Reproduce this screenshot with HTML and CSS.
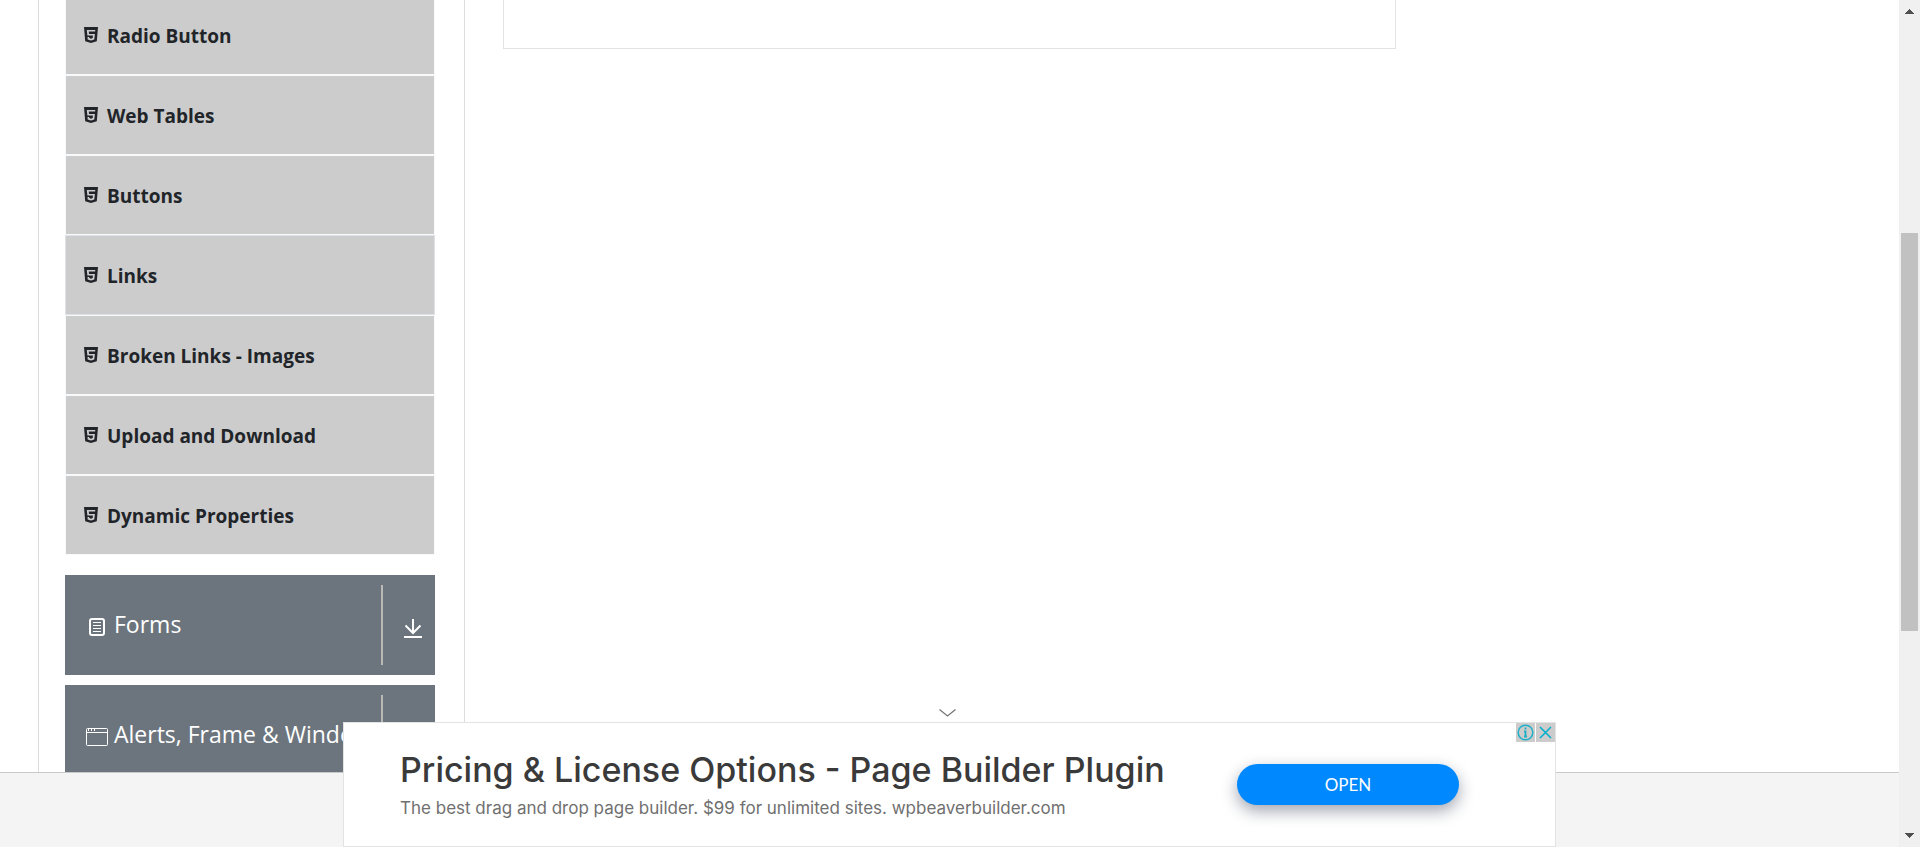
FILE: index.html
```html
<!DOCTYPE html>
<html lang="en">
<head>
<meta charset="utf-8">
<title>Elements</title>
<link rel="stylesheet" href="styles.css">
</head>
<body>
<svg class="defs" aria-hidden="true">
  <symbol id="html5" viewBox="0 0 14 16">
    <path fill="currentColor" fill-rule="evenodd" d="M0 0h14l-1.200 14.200L7 16l-5.800-1.800zM2.800 3l.6 5.500h5.500l-.2 2.600-1.700.6-1.700-.6-.1-1.200H3.500l.2 2.500L7 13.600l3.300-1.200.6-5.400H5L4.800 4.600h6.300L11.300 3z"/>
  </symbol>
  <symbol id="download" viewBox="0 0 18 20">
    <path fill="none" stroke="currentColor" stroke-width="2" d="M9 0v14M1.500 6.500L9 14l7.500-7.500M0 18h18"/>
  </symbol>
</svg>
<div class="viewport">
  <div class="page">
    <aside class="sidebar">
      <ul class="menu">
        <li><a href="#"><svg><use href="#html5"/></svg>Radio Button</a></li>
        <li><a href="#"><svg><use href="#html5"/></svg>Web Tables</a></li>
        <li><a href="#"><svg><use href="#html5"/></svg>Buttons</a></li>
        <li class="current"><a href="#"><svg><use href="#html5"/></svg>Links</a></li>
        <li><a href="#"><svg><use href="#html5"/></svg>Broken Links - Images</a></li>
        <li><a href="#"><svg><use href="#html5"/></svg>Upload and Download</a></li>
        <li><a href="#"><svg><use href="#html5"/></svg>Dynamic Properties</a></li>
      </ul>
      <button class="group" type="button">
        <svg class="group-icon" viewBox="0 0 22 18"><rect x="4" y="1" width="14" height="16" rx="2" fill="none" stroke="#fff" stroke-width="2"/><path d="M7 4.500h8M7 7.500h8M7 10.500h8M7 13.500h8" stroke="#fff"/></svg>
        <span class="group-title">Forms</span>
        <span class="group-toggle"><svg><use href="#download"/></svg></span>
      </button>
      <button class="group" type="button">
        <svg class="group-icon" viewBox="0 0 22 18"><rect x=".5" y=".5" width="21" height="17" rx="1" fill="none" stroke="#fff"/><path d="M1 4.500h20M2.500 1v2M5.500 1v2M8.500 1v2" stroke="#fff"/></svg>
        <span class="group-title">Alerts, Frame &amp; Windows</span>
        <span class="group-toggle"><svg><use href="#download"/></svg></span>
      </button>
    </aside>
    <main class="panel"></main>
  </div>
  <div class="scrollbar" aria-hidden="true">
    <svg viewBox="0 0 9 5" shape-rendering="crispEdges"><path fill="#505050" d="M0 5L4.500 0 9 5z"/></svg>
    <div class="track"><div class="thumb"></div></div>
    <svg viewBox="0 0 9 5" shape-rendering="crispEdges"><path fill="#505050" d="M0 0h9L4.500 5z"/></svg>
  </div>
</div>
<div class="anchor">
  <div class="anchor-bar"></div>
  <button class="collapse" type="button" aria-label="Collapse"><svg viewBox="0 0 17 8"><path d="M.5.500l8 6.500 8-6.500" fill="none" stroke="#777" stroke-width="1.300"/></svg></button>
  <section class="ad">
    <div class="ad-copy">
      <a class="ad-title" href="#">Pricing &amp; License Options - Page Builder Plugin</a>
      <a class="ad-text" href="#">The best drag and drop page builder. $99 for unlimited sites. wpbeaverbuilder.com</a>
    </div>
    <button class="open" type="button">OPEN</button>
    <div class="choices">
      <button type="button" aria-label="Ad information"><svg viewBox="0 0 19 19"><circle cx="9.500" cy="9.500" r="7.300" fill="none" stroke="#1fb0c8" stroke-width="1.500"/><path d="M9.500 4.500v2M8 8.500h1.500v5M8 13.500h3" fill="none" stroke="#1fb0c8" stroke-width="1.800"/></svg></button>
      <button type="button" aria-label="Close ad"><svg viewBox="0 0 19 19"><path d="M4 4l11 11M15 4L4 15" stroke="#00aecd" stroke-width="1.500"/></svg></button>
    </div>
  </section>
</div>
</body>
</html>
```
FILE: styles.css
```css
* { box-sizing: border-box; }

body {
  margin: 0;
  height: 100vh;
  overflow: hidden;
  background: #fff;
  color: #212529;
  font-family: "Open Sans", "Noto Sans", sans-serif;
}

button {
  margin: 0;
  padding: 0;
  border: 0;
  font: inherit;
  cursor: pointer;
}

a { color: inherit; text-decoration: none; }
svg { display: block; flex: none; }
.defs { position: absolute; width: 0; height: 0; }

.viewport {
  display: grid;
  grid-template-columns: minmax(0, 1fr) 21px;
  height: 100vh;
}

.page {
  display: grid;
  grid-template-columns: minmax(0, 427fr) minmax(0, 893fr) minmax(0, 465fr);
  column-gap: 38px;
  padding-left: 38px;
  overflow: hidden;
}

.sidebar {
  padding: 0 29px 0 26px;
  border: solid #dcdcdc;
  border-width: 0 1px;
}

.menu {
  margin: -5px 0 20px;
  padding: 0;
  list-style: none;
}

.menu li {
  height: 80px;
  background: #ccc;
  border: 1px solid #f8f9fa;
}

.menu .current { border-color: #dee2e6; }

.menu a {
  display: flex;
  align-items: center;
  gap: 9px;
  height: 100%;
  padding: 2px 18px 0;
  font-size: 19px;
  font-weight: 700;
  line-height: 26px;
}

.menu svg { width: 14px; height: 16px; margin-bottom: 2px; }

.group {
  display: flex;
  align-items: center;
  width: 100%;
  height: 100px;
  margin-bottom: 10px;
  padding: 10px 0 10px 21px;
  background: #6c757d;
  color: #fff;
  font-size: 23px;
  text-align: left;
}

.group-icon { width: 22px; height: 18px; margin: 4px 6px 0 0; }
.group-title { flex: 1; min-width: 0; padding-bottom: 2px; white-space: nowrap; }

.group-toggle {
  display: flex;
  flex: none;
  align-items: center;
  width: 54px;
  height: 80px;
  padding: 8px 0 0 21px;
  border-left: 2px solid #b9b9b5;
}

.group-toggle svg { width: 18px; height: 20px; }

.panel {
  height: 49px;
  border: 1px solid #e3e3e3;
  border-top: 0;
}

.scrollbar {
  display: flex;
  flex-direction: column;
  align-items: center;
  padding: 9px 0;
  background: #f0f0f0;
}

.scrollbar svg { width: 9px; height: 5px; }

.track {
  display: grid;
  grid-template-rows: 219fr 398fr 202fr;
  flex: 1;
}

.thumb { grid-row: 2; width: 17px; background: #c1c1c1; }

.anchor {
  position: fixed;
  right: 21px;
  bottom: 0;
  left: 0;
  display: flex;
  flex-direction: column;
  align-items: center;
}

.anchor-bar {
  position: absolute;
  right: 0;
  bottom: 0;
  left: 0;
  height: 75px;
  background: #f4f4f4;
  border-top: 1px solid #c9c9c9;
}

.collapse { padding: 0 4px 5px 0; background: none; }
.collapse svg { width: 17px; height: 8px; }

.ad {
  position: relative;
  display: flex;
  align-items: center;
  justify-content: space-between;
  width: 100%;
  max-width: 1213px;
  height: 125px;
  padding: 0 96px 0 56px;
  background: #fff;
  border: 1px solid #e3e3e3;
}

.ad-copy { display: flex; flex-direction: column; gap: 4px; padding-bottom: 1px; white-space: nowrap; }

.ad-title {
  color: #3a3a3a;
  font-family: Inter, sans-serif;
  font-size: 34px;
  font-weight: 500;
  line-height: 44px;
}

.ad-text {
  color: #707070;
  font-family: Inter, sans-serif;
  font-size: 17px;
  line-height: 24px;
}

.open {
  width: 222px;
  height: 41px;
  background: #08f;
  border-radius: 21px;
  box-shadow: 0 6px 16px rgba(20, 30, 60, .4);
  color: #fff;
  font-family: Lato, sans-serif;
  font-size: 17px;
}

.choices { position: absolute; top: 0; right: 0; display: flex; gap: 1px; }
.choices button { background: #ccc; }
.choices svg { width: 19px; height: 19px; }
```
